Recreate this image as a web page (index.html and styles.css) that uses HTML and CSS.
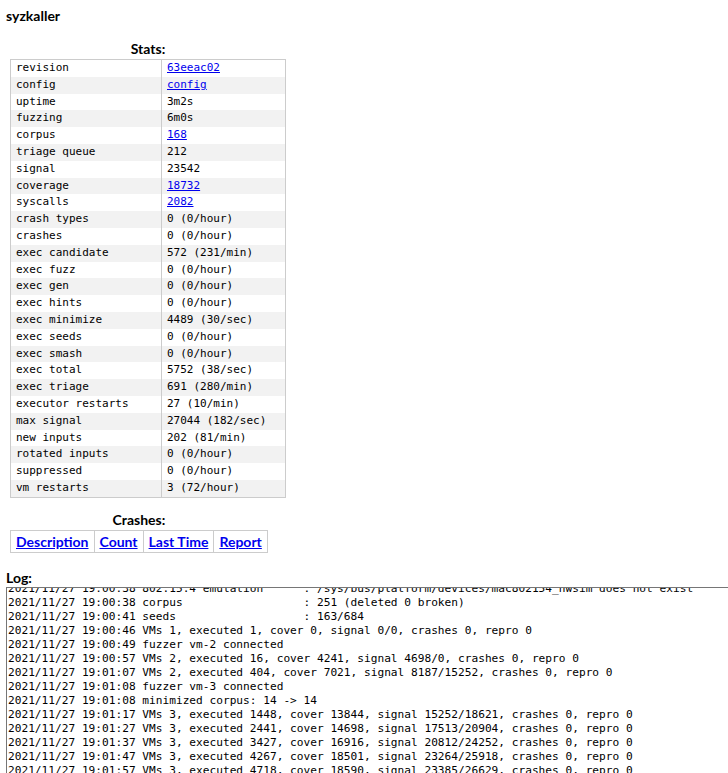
FILE: index.html
```
<!doctype html>
<html>
<head>
<meta charset="utf-8">
<title>syzkaller</title>
<link rel="stylesheet" href="styles.css">
</head>
<body>
<div class="title">syzkaller</div>

<table class="list_table stats">
  <caption>Stats:</caption>
  <tr><td class="stat_name">revision</td><td class="stat_value"><a href="#">63eeac02</a></td></tr>
  <tr><td class="stat_name">config</td><td class="stat_value"><a href="#">config</a></td></tr>
  <tr><td class="stat_name">uptime</td><td class="stat_value">3m2s</td></tr>
  <tr><td class="stat_name">fuzzing</td><td class="stat_value">6m0s</td></tr>
  <tr><td class="stat_name">corpus</td><td class="stat_value"><a href="#">168</a></td></tr>
  <tr><td class="stat_name">triage queue</td><td class="stat_value">212</td></tr>
  <tr><td class="stat_name">signal</td><td class="stat_value">23542</td></tr>
  <tr><td class="stat_name">coverage</td><td class="stat_value"><a href="#">18732</a></td></tr>
  <tr><td class="stat_name">syscalls</td><td class="stat_value"><a href="#">2082</a></td></tr>
  <tr><td class="stat_name">crash types</td><td class="stat_value">0 (0/hour)</td></tr>
  <tr><td class="stat_name">crashes</td><td class="stat_value">0 (0/hour)</td></tr>
  <tr><td class="stat_name">exec candidate</td><td class="stat_value">572 (231/min)</td></tr>
  <tr><td class="stat_name">exec fuzz</td><td class="stat_value">0 (0/hour)</td></tr>
  <tr><td class="stat_name">exec gen</td><td class="stat_value">0 (0/hour)</td></tr>
  <tr><td class="stat_name">exec hints</td><td class="stat_value">0 (0/hour)</td></tr>
  <tr><td class="stat_name">exec minimize</td><td class="stat_value">4489 (30/sec)</td></tr>
  <tr><td class="stat_name">exec seeds</td><td class="stat_value">0 (0/hour)</td></tr>
  <tr><td class="stat_name">exec smash</td><td class="stat_value">0 (0/hour)</td></tr>
  <tr><td class="stat_name">exec total</td><td class="stat_value">5752 (38/sec)</td></tr>
  <tr><td class="stat_name">exec triage</td><td class="stat_value">691 (280/min)</td></tr>
  <tr><td class="stat_name">executor restarts</td><td class="stat_value">27 (10/min)</td></tr>
  <tr><td class="stat_name">max signal</td><td class="stat_value">27044 (182/sec)</td></tr>
  <tr><td class="stat_name">new inputs</td><td class="stat_value">202 (81/min)</td></tr>
  <tr><td class="stat_name">rotated inputs</td><td class="stat_value">0 (0/hour)</td></tr>
  <tr><td class="stat_name">suppressed</td><td class="stat_value">0 (0/hour)</td></tr>
  <tr><td class="stat_name">vm restarts</td><td class="stat_value">3 (72/hour)</td></tr>
</table>

<table class="list_table crashes">
  <caption>Crashes:</caption>
  <tr>
    <th><a href="#">Description</a></th>
    <th><a href="#">Count</a></th>
    <th><a href="#">Last Time</a></th>
    <th><a href="#">Report</a></th>
  </tr>
</table>

<div class="log_label">Log:</div>
<div class="log">
<pre class="log_text">2021/11/27 19:00:38 802.15.4 emulation      : /sys/bus/platform/devices/mac802154_hwsim does not exist
2021/11/27 19:00:38 corpus                  : 251 (deleted 0 broken)
2021/11/27 19:00:41 seeds                   : 163/684
2021/11/27 19:00:46 VMs 1, executed 1, cover 0, signal 0/0, crashes 0, repro 0
2021/11/27 19:00:49 fuzzer vm-2 connected
2021/11/27 19:00:57 VMs 2, executed 16, cover 4241, signal 4698/0, crashes 0, repro 0
2021/11/27 19:01:07 VMs 2, executed 404, cover 7021, signal 8187/15252, crashes 0, repro 0
2021/11/27 19:01:08 fuzzer vm-3 connected
2021/11/27 19:01:08 minimized corpus: 14 -> 14
2021/11/27 19:01:17 VMs 3, executed 1448, cover 13844, signal 15252/18621, crashes 0, repro 0
2021/11/27 19:01:27 VMs 3, executed 2441, cover 14698, signal 17513/20904, crashes 0, repro 0
2021/11/27 19:01:37 VMs 3, executed 3427, cover 16916, signal 20812/24252, crashes 0, repro 0
2021/11/27 19:01:47 VMs 3, executed 4267, cover 18501, signal 23264/25918, crashes 0, repro 0
2021/11/27 19:01:57 VMs 3, executed 4718, cover 18590, signal 23385/26629, crashes 0, repro 0
2021/11/27 19:02:07 VMs 3, executed 5203, cover 18732, signal 23542/27044, crashes 0, repro 0
2021/11/27 19:02:17 VMs 3, executed 5752, cover 18732, signal 23542/27044, crashes 0, repro 0</pre>
</div>
</body>
</html>
```

FILE: styles.css
```
html {
  overflow: hidden;
}

body {
  margin: 0;
  padding: 0 0 0 6px;
  font-family: Lato, "Open Sans", sans-serif;
  font-size: 14px;
  color: #000;
  background: #fff;
}

.title {
  margin-top: 8px;
  font-weight: bold;
  line-height: 16px;
}

.list_table {
  border-collapse: collapse;
  margin-left: 4px;
}

.list_table caption {
  font-weight: bold;
  line-height: 16px;
  padding-bottom: 2px;
  text-align: center;
}

.stats {
  margin-top: 17px;
  width: 276px;
  border: 1px solid #cccccc;
}

.stats td {
  font-family: "DejaVu Sans Mono", monospace;
  font-size: 11px;
  line-height: 12.8px;
  padding: 2px 5px;
  white-space: nowrap;
}

.stats td.stat_name {
  width: 140px;
  border-right: 1px solid #cccccc;
}

.stats tr:nth-child(even) {
  background: #f2f2f2;
}

.crashes {
  margin-top: 14px;
}

.crashes th {
  border: 1px solid #cccccc;
  padding: 2px 5px;
  font-weight: bold;
  background: #ffffff;
}

a {
  color: #0000ee;
  text-decoration: underline;
}

.log_label {
  margin-top: 17px;
  font-weight: bold;
  line-height: 16px;
}

.log {
  margin-top: 1px;
  width: calc(100vw);
  height: 280px;
  border: 1px solid #767676;
  padding: 2px 1px;
  overflow: hidden;
}

.log_text {
  margin: -8px 0 0 0;
  font-family: "DejaVu Sans Mono", monospace;
  font-size: 11.17px;
  line-height: 14px;
  color: #000;
}
```
